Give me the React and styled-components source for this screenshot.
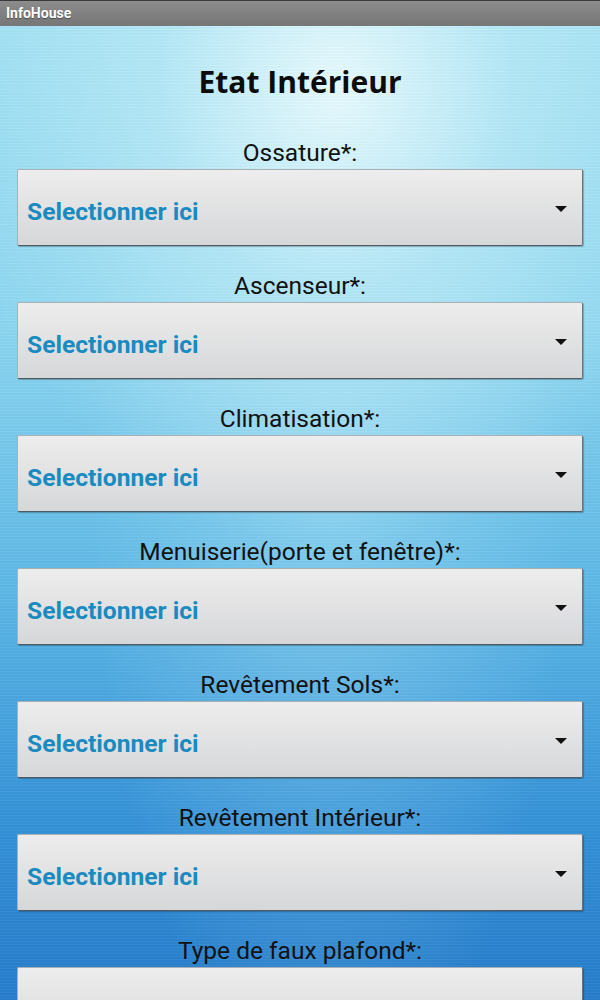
import React from "react";
import styled, { createGlobalStyle } from "styled-components";

const GlobalStyle = createGlobalStyle`
  html, body {
    margin: 0;
    padding: 0;
    height: 1000px;
    overflow: hidden;
  }
  body {
    font-family: Roboto, "Liberation Sans", sans-serif;
  }
`;

const Screen = styled.div`
  width: 600px;
  height: 1000px;
  display: flex;
  flex-direction: column;
  overflow: hidden;
`;

const TitleBar = styled.div`
  height: 26px;
  flex: none;
  box-sizing: border-box;
  border-top: 1px solid #3a3a3a;
  background: linear-gradient(#8c8c8c, #767676);
  color: #fff;
  font-family: Roboto, "Liberation Sans", sans-serif;
  font-weight: bold;
  font-size: 14px;
  line-height: 25px;
  padding-left: 6px;
  text-shadow: 0 1px 1px rgba(0, 0, 0, 0.4);
`;

const Content = styled.div`
  flex: 1;
  display: flex;
  flex-direction: column;
  padding: 0 17px;
  background:
    repeating-linear-gradient(
      0deg,
      rgba(255, 255, 255, 0.03) 0px,
      rgba(255, 255, 255, 0.03) 1px,
      rgba(0, 0, 0, 0.02) 1px,
      rgba(0, 0, 0, 0.02) 3px
    ),
    radial-gradient(
      ellipse 65% 45% at 56% 6%,
      rgba(235, 252, 255, 0.95) 0%,
      rgba(200, 240, 250, 0.55) 45%,
      rgba(160, 225, 245, 0) 100%
    ),
    radial-gradient(
      ellipse 40% 60% at 55% 45%,
      rgba(190, 238, 252, 0.35) 0%,
      rgba(190, 238, 252, 0) 100%
    ),
    linear-gradient(
      180deg,
      #9ee0f4 0%,
      #8cd6f1 30%,
      #5fb9e7 55%,
      #3693d8 78%,
      #2478c9 100%
    );
`;

const Heading = styled.h1`
  margin: 40px 0 15px;
  text-align: center;
  font-family: "Open Sans", "Liberation Sans", sans-serif;
  font-weight: bold;
  font-size: 30px;
  line-height: 32px;
  color: #0c0c0c;
`;

const Field = styled.div`
  display: flex;
  flex-direction: column;
  padding-top: 26px;
`;

const Label = styled.div`
  text-align: center;
  font-size: 24.5px;
  line-height: 28px;
  color: #121212;
  margin-bottom: 2px;
`;

const Spinner = styled.div`
  height: 77px;
  box-sizing: border-box;
  display: flex;
  align-items: center;
  justify-content: space-between;
  padding: 8px 15px 0 9px;
  border-radius: 2px;
  border: 1px solid #a9b0b4;
  border-right-color: #6e757a;
  border-bottom-color: #4f5a62;
  background: linear-gradient(#ededed, #d6d7d9);
  box-shadow: 1px 1px 1px rgba(0, 0, 0, 0.25);
`;

const Value = styled.span`
  font-weight: bold;
  font-size: 24.6px;
  color: #1a8bc1;
  white-space: nowrap;
`;

const Arrow = styled.span`
  width: 0;
  height: 0;
  border-left: 6px solid transparent;
  border-right: 6px solid transparent;
  border-top: 6px solid #111;
  margin-top: -6px;
`;

const fields = [
  "Ossature*:",
  "Ascenseur*:",
  "Climatisation*:",
  "Menuiserie(porte et fenêtre)*:",
  "Revêtement Sols*:",
  "Revêtement Intérieur*:",
  "Type de faux plafond*:",
];

export default function App() {
  return (
    <Screen>
      <GlobalStyle />
      <TitleBar>InfoHouse</TitleBar>
      <Content>
        <Heading>Etat Intérieur</Heading>
        {fields.map((f) => (
          <Field key={f}>
            <Label>{f}</Label>
            <Spinner>
              <Value>Selectionner ici</Value>
              <Arrow />
            </Spinner>
          </Field>
        ))}
      </Content>
    </Screen>
  );
}
